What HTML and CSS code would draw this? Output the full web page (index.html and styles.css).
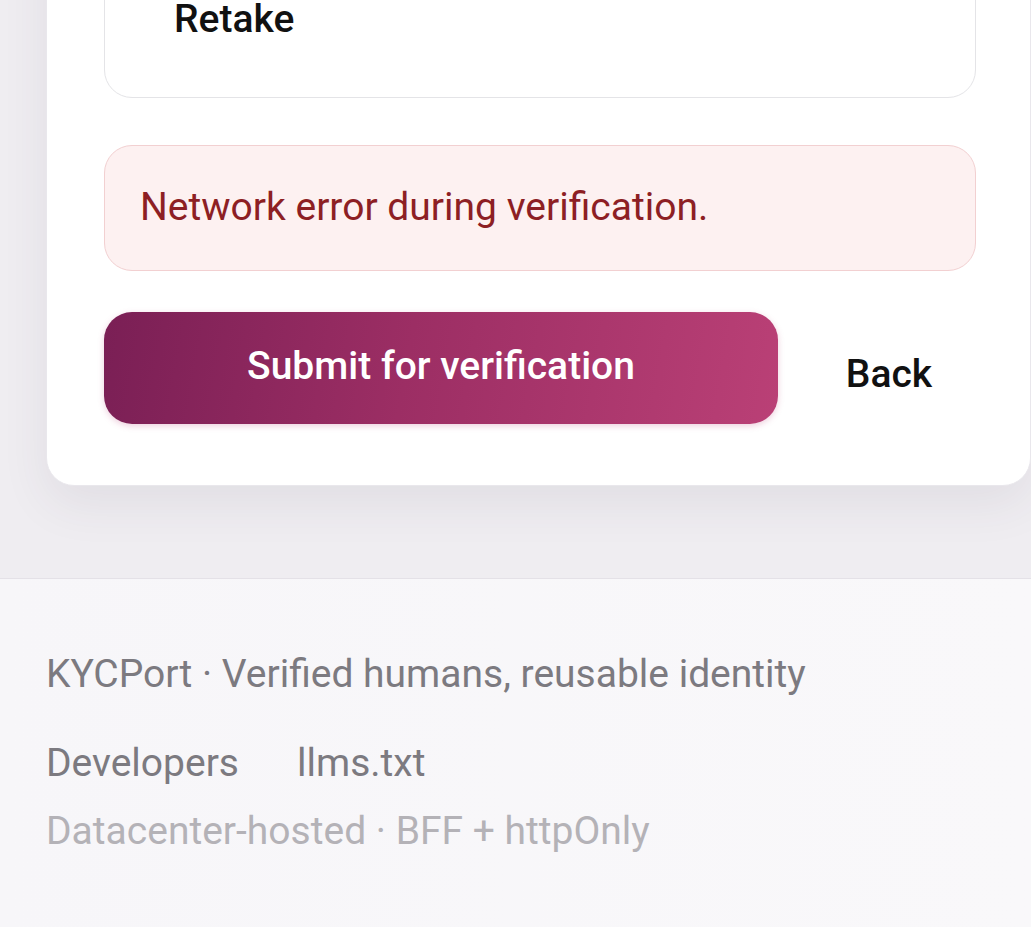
FILE: index.html
```html
<!DOCTYPE html>
<html lang="en">

<head>
    <meta charset="UTF-8">
    <meta name="viewport" content="width=device-width, initial-scale=1.0">
    <title>KYCPort - Verify</title>
    <link rel="stylesheet" href="styles.css">
</head>

<body>
    <main class="page">
        <div class="card">
            <div class="photo-panel">
                <button class="retake" type="button">Retake</button>
            </div>
            <div class="error-box">Network error during verification.</div>
            <div class="actions">
                <button class="submit" type="button">Submit for verification</button>
                <button class="back" type="button">Back</button>
            </div>
        </div>
    </main>

    <footer class="site-footer">
        <p class="tagline">KYCPort · Verified humans, reusable identity</p>
        <nav class="footer-links">
            <a href="#">Developers</a>
            <a href="#">llms.txt</a>
        </nav>
        <p class="hosting">Datacenter-hosted · BFF + httpOnly</p>
    </footer>
</body>

</html>
```

FILE: styles.css
```css
body {
    font-family: Roboto, "Noto Sans", Arial, sans-serif;
    margin: 0;
    padding: 0;
    background-color: #efedf1;
    color: #111;
    overflow: hidden;
}

.page {
    margin-top: -140px;
    padding: 0 0 92px 46px;
}

.card {
    width: 872px;
    padding: 40px 54px 61px 57px;
    background: #fff;
    border: 1px solid #e9e7ec;
    border-radius: 28px;
    box-shadow: 0 18px 48px rgba(70, 50, 80, 0.08);
}

.photo-panel {
    padding: 80px 32px 41px 32px;
    border: 1px solid #e4e4e7;
    border-radius: 28px;
}

button {
    font-family: inherit;
    font-size: 39px;
    line-height: 46px;
    border: none;
    background: none;
    cursor: pointer;
}

.retake {
    padding: 14px 37px;
    font-weight: 500;
    color: #111;
}

.error-box {
    margin-top: 47px;
    padding: 38px 35px 40px 35px;
    font-size: 39px;
    line-height: 46px;
    color: #8d1f24;
    background-color: #fdf1f1;
    border: 1px solid #f2d0d1;
    border-radius: 28px;
}

.actions {
    display: flex;
    align-items: center;
    gap: 24px;
    margin-top: 41px;
}

.submit {
    flex: 1;
    padding: 31px 20px 35px 20px;
    font-weight: 500;
    color: #fff;
    border-radius: 28px;
    background: linear-gradient(100deg, #7a1f55 0%, #9c2e64 45%, #ba4076 100%);
    box-shadow: 0 2px 6px rgba(186, 64, 118, 0.25);
}

.back {
    width: 174px;
    padding: 20px 0 8px 0;
    font-weight: 500;
    color: #111;
}

.site-footer {
    padding: 72px 46px 60px 46px;
    min-height: 400px;
    background: linear-gradient(90deg, #f7f6f9 0%, #f9f8fa 100%);
    border-top: 1px solid #e4e1e7;
}

.tagline {
    margin: 0;
    font-size: 39px;
    line-height: 46px;
    color: #7c7a80;
}

.footer-links {
    display: flex;
    gap: 58px;
    margin-top: 43px;
}

.footer-links a {
    font-size: 39px;
    line-height: 46px;
    color: #7c7a80;
    text-decoration: none;
}

.hosting {
    margin: 22px 0 0 0;
    font-size: 39px;
    line-height: 46px;
    color: #b4b2b7;
}
```
